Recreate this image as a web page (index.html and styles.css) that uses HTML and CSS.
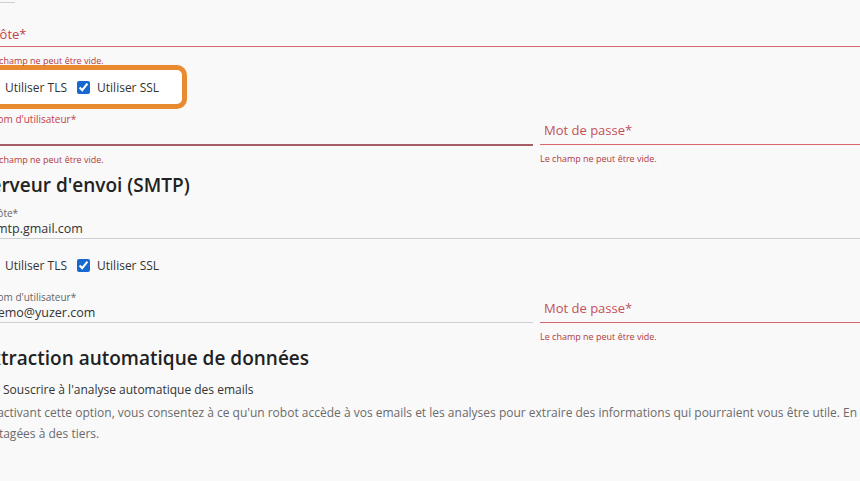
FILE: index.html
```html
<!DOCTYPE html>
<html lang="fr">

<head>
    <meta charset="UTF-8">
    <meta name="viewport" content="width=device-width, initial-scale=1.0">
    <title>Paramètres email</title>
    <link rel="stylesheet" href="styles.css">
</head>

<body>
    <div class="page">
        <div class="stub"></div>

        <div class="field field-empty field-error field-wide">
            <span class="placeholder">Hôte*</span>
        </div>
        <p class="helper">Le champ ne peut être vide.</p>

        <div class="checks highlight">
            <label><input type="checkbox"> Utiliser TLS</label>
            <label><input type="checkbox" checked> Utiliser SSL</label>
        </div>

        <div class="cols">
            <div>
                <div class="field field-error field-focus">
                    <span class="label">Nom d'utilisateur*</span>
                    <span class="value">&nbsp;</span>
                </div>
                <p class="helper">Le champ ne peut être vide.</p>
            </div>
            <div class="col-right">
                <div class="field field-empty field-error">
                    <span class="placeholder">Mot de passe*</span>
                </div>
                <p class="helper">Le champ ne peut être vide.</p>
            </div>
        </div>

        <h2>Serveur d'envoi (SMTP)</h2>

        <div class="field">
            <span class="label">Hôte*</span>
            <span class="value">smtp.gmail.com</span>
        </div>

        <div class="checks">
            <label><input type="checkbox"> Utiliser TLS</label>
            <label><input type="checkbox" checked> Utiliser SSL</label>
        </div>

        <div class="cols">
            <div>
                <div class="field">
                    <span class="label">Nom d'utilisateur*</span>
                    <span class="value">demo@yuzer.com</span>
                </div>
            </div>
            <div class="col-right">
                <div class="field field-empty field-error">
                    <span class="placeholder">Mot de passe*</span>
                </div>
                <p class="helper">Le champ ne peut être vide.</p>
            </div>
        </div>

        <h2 class="h2-last">Extraction automatique de données</h2>

        <label class="subscribe"><input type="checkbox"> Souscrire à l'analyse automatique des emails</label>
        <p class="notice">En activant cette option, vous consentez à ce qu'un robot accède à vos emails et les analyses
            pour extraire des informations qui pourraient vous être utile. En aucun cas vos données ne seront
            partagées à des tiers.</p>
    </div>
</body>

</html>
```

FILE: styles.css
```css
* {
    box-sizing: border-box;
    margin: 0;
    padding: 0;
}

body {
    background-color: #f9f9f9;
    font-family: "Open Sans", "Noto Sans", Arial, sans-serif;
    color: #333;
    overflow: hidden;
}

.page {
    width: 1113px;
    margin-left: -20px;
}

.stub {
    width: 35px;
    height: 3px;
    border-bottom: 1px solid #cfcfcf;
}

.field {
    display: flex;
    flex-direction: column;
    margin-left: 10px;
    border-bottom: 1px solid #cfcfcf;
}

.field .label {
    font-size: 10px;
    line-height: 14px;
    color: #666;
}

.field .value {
    font-size: 12.5px;
    line-height: 18px;
    color: #333;
}

.field-empty {
    padding: 9px 0 5px;
}

.field-empty .placeholder {
    font-size: 13px;
    line-height: 18px;
    color: #666;
}

.field-error {
    border-bottom-color: #d8666c;
}

.field-error .label,
.field-error .placeholder {
    color: #c2414a;
}

.col-right .field-error .placeholder {
    color: #c4505a;
}

.field-focus {
    border-bottom: 2px solid #a75d66;
}

.field-wide {
    padding: 22px 0 3px;
}

.helper {
    margin: 8px 0 -4px 7px;
    font-size: 9px;
    line-height: 12px;
    color: #b23a40;
}

.checks {
    display: flex;
    align-items: center;
    gap: 10px;
    width: fit-content;
    height: 44px;
    margin-top: 4px;
    padding-right: 23px;
    border: 5px solid transparent;
    border-left: 0;
    border-radius: 10px;
    font-size: 12px;
    white-space: nowrap;
}

.highlight {
    margin-top: 2px;
    border: 5px solid #e98a30;
    background-color: #fff;
}

.checks label,
.subscribe {
    display: flex;
    align-items: center;
    gap: 7px;
}

.checks label:first-child {
    margin-left: 5px;
}

.highlight label:first-child {
    margin-left: 0;
}

input[type="checkbox"] {
    width: 13px;
    height: 13px;
    margin: 0;
    accent-color: #1769cf;
}

.cols {
    display: grid;
    grid-template-columns: 553px 553px;
    gap: 7px;
    margin-top: 3px;
}

.col-right .field {
    margin-left: 0;
}

.col-right .placeholder {
    padding-left: 4px;
}

.cols .helper {
    margin: 8px 0 0 7px;
}

.col-right .helper {
    margin-left: 0;
}

h2 {
    margin: 6px 0 8px;
    font-size: 19px;
    line-height: 26px;
    font-weight: 600;
    color: #222;
}

.h2-last {
    margin-top: 2px;
    margin-bottom: 10px;
}

.subscribe {
    margin-left: 3px;
    font-size: 12px;
    line-height: 18px;
    color: #333;
}

.notice {
    margin-top: 3px;
    font-size: 12px;
    line-height: 21px;
    color: #6b6b6b;
}
```
